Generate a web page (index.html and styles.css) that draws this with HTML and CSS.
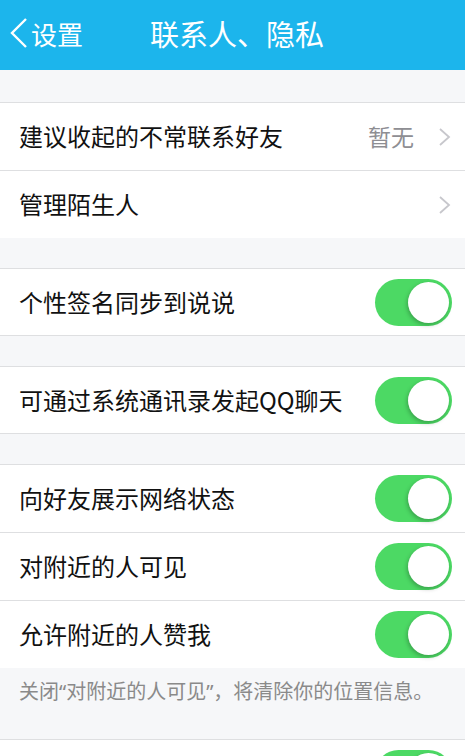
FILE: index.html
```html
<!DOCTYPE html>
<html lang="zh-CN">
<head>
  <meta charset="UTF-8">
  <meta name="viewport" content="width=device-width, initial-scale=1.0">
  <title>联系人、隐私</title>
  <link rel="stylesheet" href="styles.css">
</head>
<body>
  <header class="nav">
    <a class="back" href="#">
      <svg class="back-icon" width="20" height="32" viewBox="0 0 20 32">
        <polyline points="18,2 4,16 18,30" fill="none" stroke="#fff" stroke-width="2.4"/>
      </svg>
      <span>设置</span>
    </a>
    <h1 class="title">联系人、隐私</h1>
  </header>

  <div class="list">
    <div class="group open">
      <div class="row">
        <span class="label">建议收起的不常联系好友</span>
        <span class="value">暂无</span>
        <svg class="arrow" width="14" height="20" viewBox="0 0 14 20">
          <polyline points="2,2 11,10 2,18" fill="none" stroke="#c7c7cc" stroke-width="1.8"/>
        </svg>
      </div>
      <div class="row">
        <span class="label">管理陌生人</span>
        <svg class="arrow" width="14" height="20" viewBox="0 0 14 20">
          <polyline points="2,2 11,10 2,18" fill="none" stroke="#c7c7cc" stroke-width="1.8"/>
        </svg>
      </div>
    </div>

    <div class="group single">
      <div class="row">
        <span class="label">个性签名同步到说说</span>
        <span class="switch on"></span>
      </div>
    </div>

    <div class="group single">
      <div class="row">
        <span class="label">可通过系统通讯录发起QQ聊天</span>
        <span class="switch on"></span>
      </div>
    </div>

    <div class="group open">
      <div class="row">
        <span class="label">向好友展示网络状态</span>
        <span class="switch on"></span>
      </div>
      <div class="row">
        <span class="label">对附近的人可见</span>
        <span class="switch on"></span>
      </div>
      <div class="row">
        <span class="label">允许附近的人赞我</span>
        <span class="switch on"></span>
      </div>
    </div>
    <p class="note">关闭“对附近的人可见”，将清除你的位置信息。</p>

    <div class="group single">
      <div class="row">
        <span class="label">&nbsp;</span>
        <span class="switch on"></span>
      </div>
    </div>
  </div>
</body>
</html>
```

FILE: styles.css
```css
/* estilos basicos */
body {
  margin: 0;
  padding: 0;
  height: 756px;
  overflow: hidden;
  background-color: #f6f7f9;
  font-family: "Noto Sans CJK SC", "Noto Sans", sans-serif;
  color: #111;
}
.nav {
  height: 70px;
  background-color: #1cb5ec;
  display: flex;
  align-items: center;
  color: #fff;
}
.back {
  display: flex;
  align-items: center;
  color: #fff;
  text-decoration: none;
  font-size: 26px;
  padding-left: 8px;
  margin-top: -4px;
}
.back-icon {
  margin-right: 3px;
}
.title {
  margin: -4px 0 0 67px;
  font-size: 29px;
  font-weight: normal;
}
.list {
  padding-top: 32px;
}
.group {
  background-color: #fff;
  border-top: 1px solid #dedfe1;
}
.group.single {
  border-bottom: 1px solid #dedfe1;
  margin-bottom: 30px;
}
.group.open + .group {
  margin-top: 30px;
}
.row {
  height: 67px;
  display: flex;
  align-items: center;
  padding: 0 13px 0 19px;
}
.group.single .row {
  height: 66px;
}
.row + .row {
  border-top: 1px solid #dedfe1;
}
.label {
  flex: 1;
  font-size: 24px;
  margin-top: -2px;
}
.value {
  font-size: 23px;
  color: #8e8e93;
  margin-right: 24px;
  margin-top: -2px;
}
.switch {
  width: 77px;
  height: 47px;
  border-radius: 24px;
  background-color: #4cd964;
  position: relative;
}
.switch::after {
  content: "";
  position: absolute;
  top: 3px;
  right: 3px;
  width: 41px;
  height: 41px;
  border-radius: 50%;
  background-color: #fff;
  box-shadow: -1px 2px 4px rgba(0,0,0,0.25);
}
.note {
  margin: 0;
  padding: 11px 19px 34px;
  line-height: 26px;
  font-size: 20px;
  color: #8a8a8a;
  font-family: "Noto Sans", "Noto Sans CJK SC", sans-serif;
}
```
